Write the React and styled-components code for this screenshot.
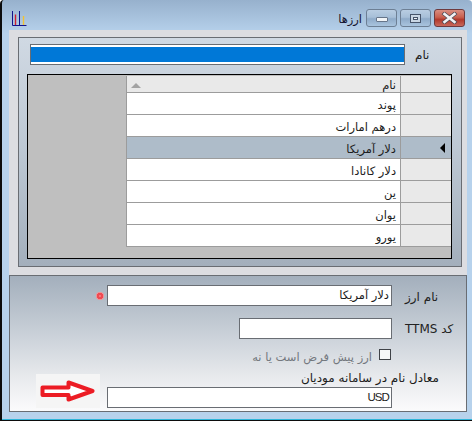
import React from 'react';
import styled, { createGlobalStyle } from 'styled-components';

const GlobalStyle = createGlobalStyle`
  html, body {
    margin: 0;
    padding: 0;
    background: #ffffff;
  }
  * {
    box-sizing: border-box;
  }
`;

const Page = styled.div`
  width: 474px;
  height: 422px;
  overflow: hidden;
  background: #ffffff;
  font-family: "DejaVu Sans", "Liberation Sans", sans-serif;
  font-size: 11px;
  color: #111;
`;

const Window = styled.div`
  width: 472px;
  height: 421px;
  border-left: 2px solid #0c0c0c;
  border-bottom: 1px solid #0c0c0c;
  box-shadow: inset 0 -1px 0 #2fb4d8;
  padding: 0 5px 8px 7px;
  border-top-left-radius: 4px;
  border-top-right-radius: 4px;
  background: linear-gradient(180deg, #97b1cd 0%, #b7d2ec 8%, #b7d2ec 100%);
`;

const TitleBar = styled.div`
  height: 30px;
  display: flex;
  align-items: flex-start;
  padding: 9px 2px 0 3px;
`;

const AppIcon = styled.svg`
  width: 15px;
  height: 15px;
  margin-top: 2px;
`;

const TitleText = styled.span`
  margin-left: auto;
  margin-right: 4px;
  direction: rtl;
  font-size: 11.5px;
  line-height: 20px;
  color: #161630;
`;

const WinButton = styled.div`
  width: 31px;
  height: 18px;
  margin-left: ${p => p.$gap}px;
  display: flex;
  align-items: center;
  justify-content: center;
  border: 1px solid ${p => (p.$close ? '#6e3a3e' : '#6d7f94')};
  border-radius: 3px;
  background: ${p => (p.$close
    ? 'linear-gradient(180deg, #d98d80 0%, #c9604f 45%, #b2392c 60%, #c8695c 100%)'
    : 'linear-gradient(180deg, #b9cde2 0%, #a7bfd8 45%, #8fabc9 55%, #a9c4de 100%)')};
`;

const MinGlyph = styled.div`
  width: 12px;
  height: 5px;
  margin-top: 3px;
  background: #f1f4f7;
  border: 1px solid #66758a;
  border-radius: 1px;
`;

const MaxGlyph = styled.div`
  width: 11px;
  height: 9px;
  border: 1px solid #46546a;
  background: #c9d6e4;
  display: flex;
  align-items: center;
  justify-content: center;
`;

const MaxBar = styled.div`
  width: 5px;
  height: 3px;
  border: 1px solid #46546a;
  background: #eef2f6;
`;

const Client = styled.div`
  width: 458px;
  height: 382px;
  background: #dcdde1;
  padding-top: 7px;
  display: flex;
  flex-direction: column;
`;

const TopPanel = styled.div`
  width: 444px;
  height: 231px;
  margin-left: 9px;
  border: 1px solid #696d73;
  background: linear-gradient(180deg, #d0d9e3 0%, #bcc7d3 50%, #a3afbc 100%);
  padding: 6px 8px 0 8px;
`;

const SearchRow = styled.div`
  display: flex;
  align-items: center;
  height: 21px;
  padding-left: 3px;
`;

const SearchBox = styled.div`
  width: 375px;
  height: 21px;
  border: 1px solid #696d73;
  background: #ffffff;
  padding: 2px 0;
`;

const SearchFill = styled.div`
  height: 15px;
  background: #0078d7;
`;

const SearchLabel = styled.span`
  margin-left: 10px;
  margin-top: 1px;
  font-size: 12px;
  color: #222;
  direction: rtl;
`;

const Grid = styled.div`
  width: 425px;
  height: 185px;
  margin-top: 9px;
  border: 1px solid #000;
  background: #bfbfbf;
  padding: 1px 0 0 98px;
`;

const GridInner = styled.div`
  border-left: 1px solid #9c9c9c;
`;

const GridRow = styled.div`
  display: flex;
  height: 22px;
  border-bottom: 1px solid #9c9c9c;
  background: ${p => (p.$selected ? '#aebcc9' : '#ffffff')};
`;

const HeaderRow = styled(GridRow)`
  height: 17px;
  background: #e9e9e9;
`;

const NameCell = styled.div`
  width: 274px;
  display: flex;
  align-items: center;
  justify-content: space-between;
  padding: 2px 4px 0 4px;
  border-right: 1px solid #9c9c9c;
  font-size: 11.5px;
  color: #1c1c1c;
`;

const CellText = styled.span`
  margin-left: auto;
  direction: rtl;
`;

const IndicatorCell = styled.div`
  flex: 1;
  display: flex;
  align-items: center;
  justify-content: flex-end;
  padding-right: 6px;
  background: ${p => (p.$selected ? '#aebcc9' : '#e9e9e9')};
`;

const SortArrow = styled.div`
  width: 0;
  height: 0;
  border-left: 5px solid transparent;
  border-right: 5px solid transparent;
  border-bottom: 5px solid #a3a3a3;
`;

const RowPointer = styled.div`
  width: 0;
  height: 0;
  border-top: 5px solid transparent;
  border-bottom: 5px solid transparent;
  border-right: 5px solid #000;
`;

const FormPanel = styled.div`
  position: relative;
  width: 458px;
  height: 137px;
  margin-top: 8px;
  border: 1px solid #696d73;
  background: linear-gradient(180deg, #a3afbc 0%, #c2cad3 35%, #e8eaed 75%, #fbfbfc 100%);
  padding-top: 9px;
`;

const FormRow = styled.div`
  display: flex;
  align-items: center;
  height: ${p => p.$h || 21}px;
  margin-top: ${p => p.$top || 0}px;
  padding-left: ${p => p.$left}px;
`;

const RequiredMark = styled.div`
  width: 8px;
  height: 8px;
  margin-left: -11px;
  margin-right: 3px;
  margin-top: 1px;
  border-radius: 50%;
  background: radial-gradient(circle, #f7767b 0 1px, #ef4a52 1px 3px, #f58f92 3px);
`;

const TextBox = styled.div`
  width: ${p => p.$w}px;
  height: 21px;
  border: 1px solid #696d73;
  background: #ffffff;
  padding: ${p => (p.$latin ? '2px 2px 0 0' : '2px 2px 0 0')};
  text-align: right;
  direction: ${p => (p.$latin ? 'ltr' : 'rtl')};
  font-family: ${p => (p.$latin ? '"Liberation Sans", sans-serif' : 'inherit')};
  font-size: ${p => (p.$latin ? '11.5px' : '11.5px')};
  letter-spacing: ${p => (p.$latin ? '-0.9px' : '0')};
  line-height: 15px;
  color: #1c1c1c;
`;

const FieldLabel = styled.span`
  margin-left: 13px;
  margin-top: ${p => p.$top || 0}px;
  direction: rtl;
  font-size: 12px;
  white-space: nowrap;
  color: #222;
`;

const CheckRow = styled(FormRow)`
  justify-content: flex-end;
  padding-right: 75px;
`;

const CheckText = styled.span`
  direction: rtl;
  font-size: 11.5px;
  color: #74787e;
  margin-right: 7px;
  white-space: nowrap;
`;

const CheckBox = styled.div`
  width: 12px;
  height: 11px;
  margin-top: -4px;
  border: 1px solid #3f4247;
  background: #f6f7f8;
`;

const CaptionRow = styled(FormRow)`
  justify-content: flex-end;
  padding-right: 27px;
`;

const Caption = styled.span`
  direction: rtl;
  font-size: 12px;
  white-space: nowrap;
  color: #1c1c1c;
`;

const PastedArrow = styled.div`
  position: absolute;
  left: 26px;
  top: 98px;
  width: 64px;
  height: 34px;
  background: #f5f5f5;
  display: flex;
  align-items: center;
  justify-content: center;
`;

const currencies = ['پوند', 'درهم امارات', 'دلار آمریکا', 'دلار کانادا', 'ین', 'یوان', 'یورو'];

function App() {
  return (
    <Page>
      <GlobalStyle />
      <Window>
        <TitleBar>
          <AppIcon viewBox="0 0 15 15">
            <path d="M0.5 0v14.5H14.5M7.5 0v14" fill="none" stroke="#12128c" strokeWidth="1" />
            <path d="M3.5 3.5v10.5" stroke="#cf2030" strokeWidth="1.4" />
            <path d="M11.5 5v9" stroke="#f2c230" strokeWidth="1.4" />
          </AppIcon>
          <TitleText>ارزها</TitleText>
          <WinButton $gap={0}><MinGlyph /></WinButton>
          <WinButton $gap={3}><MaxGlyph><MaxBar /></MaxGlyph></WinButton>
          <WinButton $gap={3} $close>
            <svg width="17" height="12" viewBox="0 0 17 12">
              <path d="M3.5 2L13.5 10M13.5 2L3.5 10" stroke="#4a4a55" strokeWidth="4" strokeLinecap="square" />
              <path d="M3.5 2L13.5 10M13.5 2L3.5 10" stroke="#f2f2f4" strokeWidth="2.6" strokeLinecap="square" />
            </svg>
          </WinButton>
        </TitleBar>
        <Client>
          <TopPanel>
            <SearchRow>
              <SearchBox><SearchFill /></SearchBox>
              <SearchLabel>نام</SearchLabel>
            </SearchRow>
            <Grid>
              <GridInner>
                <HeaderRow>
                  <NameCell>
                    <SortArrow />
                    <CellText>نام</CellText>
                  </NameCell>
                  <IndicatorCell />
                </HeaderRow>
                {currencies.map((name, i) => (
                  <GridRow key={name} $selected={i === 2}>
                    <NameCell>
                      <CellText>{name}</CellText>
                    </NameCell>
                    <IndicatorCell $selected={i === 2}>
                      {i === 2 && <RowPointer />}
                    </IndicatorCell>
                  </GridRow>
                ))}
              </GridInner>
            </Grid>
          </TopPanel>
          <FormPanel>
            <FormRow $left={97}>
              <RequiredMark />
              <TextBox $w={285}>دلار آمریکا</TextBox>
              <FieldLabel $top={3}>نام ارز</FieldLabel>
            </FormRow>
            <FormRow $left={229} $top={12}>
              <TextBox $w={153} />
              <FieldLabel>کد TTMS</FieldLabel>
            </FormRow>
            <CheckRow $left={0} $top={10} $h={15}>
              <CheckText>ارز پیش فرض است یا نه</CheckText>
              <CheckBox />
            </CheckRow>
            <CaptionRow $left={0} $top={6} $h={16}>
              <Caption>معادل نام در سامانه مودیان</Caption>
            </CaptionRow>
            <FormRow $left={97} $top={1}>
              <TextBox $w={285} $latin>USD</TextBox>
            </FormRow>
            <PastedArrow>
              <svg width="56" height="22" viewBox="0 0 56 22">
                <path d="M2.5 7.5H28.5V2.5L52.5 11L28.5 19.5V15H2.5Z" fill="#ffffff" stroke="#ec1c24" strokeWidth="4" strokeLinejoin="round" />
              </svg>
            </PastedArrow>
          </FormPanel>
        </Client>
      </Window>
    </Page>
  );
}

export default App;
